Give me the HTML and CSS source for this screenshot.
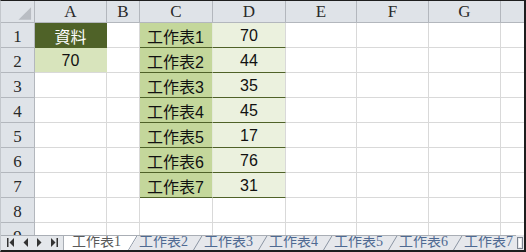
FILE: index.html
```html
<!DOCTYPE html>
<html lang="zh-Hant">
<head>
  <meta charset="UTF-8">
  <title>工作表1</title>
  <link rel="stylesheet" href="styles.css">
</head>
<body>
  <div class="window">
    <div class="grid">
      <!-- encabezados de columna -->
      <div class="corner">
        <svg width="34" height="21" viewBox="0 0 34 21"><polygon points="31,6 31,19 18,19" fill="#b9bdc3"/></svg>
      </div>
      <div class="col-head">A</div>
      <div class="col-head">B</div>
      <div class="col-head">C</div>
      <div class="col-head">D</div>
      <div class="col-head">E</div>
      <div class="col-head">F</div>
      <div class="col-head">G</div>
      <div class="col-head last"></div>

      <!-- fila 1 -->
      <div class="row-head">1</div>
      <div class="cell title">資料</div>
      <div class="cell"></div>
      <div class="cell name">工作表1</div>
      <div class="cell val">70</div>
      <div class="cell"></div><div class="cell"></div><div class="cell"></div><div class="cell last"></div>

      <!-- fila 2 -->
      <div class="row-head">2</div>
      <div class="cell result">70</div>
      <div class="cell"></div>
      <div class="cell name">工作表2</div>
      <div class="cell val">44</div>
      <div class="cell"></div><div class="cell"></div><div class="cell"></div><div class="cell last"></div>

      <!-- fila 3 -->
      <div class="row-head">3</div>
      <div class="cell"></div>
      <div class="cell"></div>
      <div class="cell name">工作表3</div>
      <div class="cell val">35</div>
      <div class="cell"></div><div class="cell"></div><div class="cell"></div><div class="cell last"></div>

      <!-- fila 4 -->
      <div class="row-head">4</div>
      <div class="cell"></div>
      <div class="cell"></div>
      <div class="cell name">工作表4</div>
      <div class="cell val">45</div>
      <div class="cell"></div><div class="cell"></div><div class="cell"></div><div class="cell last"></div>

      <!-- fila 5 -->
      <div class="row-head">5</div>
      <div class="cell"></div>
      <div class="cell"></div>
      <div class="cell name">工作表5</div>
      <div class="cell val">17</div>
      <div class="cell"></div><div class="cell"></div><div class="cell"></div><div class="cell last"></div>

      <!-- fila 6 -->
      <div class="row-head">6</div>
      <div class="cell"></div>
      <div class="cell"></div>
      <div class="cell name">工作表6</div>
      <div class="cell val">76</div>
      <div class="cell"></div><div class="cell"></div><div class="cell"></div><div class="cell last"></div>

      <!-- fila 7 -->
      <div class="row-head">7</div>
      <div class="cell"></div>
      <div class="cell"></div>
      <div class="cell name">工作表7</div>
      <div class="cell val">31</div>
      <div class="cell"></div><div class="cell"></div><div class="cell"></div><div class="cell last"></div>

      <!-- fila 8 -->
      <div class="row-head">8</div>
      <div class="cell"></div><div class="cell"></div><div class="cell"></div><div class="cell"></div>
      <div class="cell"></div><div class="cell"></div><div class="cell"></div><div class="cell last"></div>

      <!-- fila 9 -->
      <div class="row-head">9</div>
      <div class="cell"></div><div class="cell"></div><div class="cell"></div><div class="cell"></div>
      <div class="cell"></div><div class="cell"></div><div class="cell"></div><div class="cell last"></div>
    </div>

    <!-- pestañas -->
    <div class="tabbar">
      <div class="nav">
        <svg width="63" height="15" viewBox="0 0 63 15">
          <rect x="6" y="3" width="1.5" height="9" fill="#333"/>
          <polygon points="13,3 13,12 8.5,7.5" fill="#333"/>
          <polygon points="27,3 27,12 22.5,7.5" fill="#333"/>
          <polygon points="36,3 36,12 40.5,7.5" fill="#333"/>
          <polygon points="50,3 50,12 54.5,7.5" fill="#333"/>
          <rect x="55.5" y="3" width="1.5" height="9" fill="#333"/>
        </svg>
      </div>
      <div class="tabs">
        <div class="tab active"><span>工作表1</span><svg class="slash" width="10" height="15"><line x1="0.5" y1="15" x2="9.5" y2="0" stroke="#8a94a3"/></svg></div>
        <div class="tab"><span>工作表2</span><svg class="slash" width="10" height="15"><line x1="0.5" y1="15" x2="9.5" y2="0" stroke="#8a94a3"/></svg></div>
        <div class="tab"><span>工作表3</span><svg class="slash" width="10" height="15"><line x1="0.5" y1="15" x2="9.5" y2="0" stroke="#8a94a3"/></svg></div>
        <div class="tab"><span>工作表4</span><svg class="slash" width="10" height="15"><line x1="0.5" y1="15" x2="9.5" y2="0" stroke="#8a94a3"/></svg></div>
        <div class="tab"><span>工作表5</span><svg class="slash" width="10" height="15"><line x1="0.5" y1="15" x2="9.5" y2="0" stroke="#8a94a3"/></svg></div>
        <div class="tab"><span>工作表6</span><svg class="slash" width="10" height="15"><line x1="0.5" y1="15" x2="9.5" y2="0" stroke="#8a94a3"/></svg></div>
        <div class="tab"><span>工作表7</span></div>
      </div>
      <div class="scroll"><div class="thumb"></div></div>
    </div>
  </div>
</body>
</html>
```

FILE: styles.css
```css
body {
  margin: 0;
  background: white;
}
.window {
  width: 526px;
  height: 252px;
  box-sizing: border-box;
  border-top: 1px solid #1e1e1e;
  border-right: 2px solid #1e1e1e;
  border-bottom: 2px solid #1e1e1e;
  border-left: 1px solid #c3c7cc;
  display: flex;
  flex-direction: column;
  overflow: hidden;
}
.grid {
  height: 234px;
  flex: none;
  overflow: hidden;
  display: grid;
  grid-template-columns: 34px 72px 33px 73px 73px 71px 72px 72px 23px;
  grid-auto-rows: 25px;
  grid-template-rows: 22px;
  font-family: "Liberation Sans", "Noto Sans CJK TC", sans-serif;
  font-size: 16px;
  color: #111;
}
.grid > div {
  box-sizing: border-box;
}
.corner,
.col-head,
.row-head {
  background: #dfe3e8;
  border-right: 1px solid #b3b7bd;
  border-bottom: 1px solid #b3b7bd;
  font-family: "Liberation Serif", serif;
  font-size: 17px;
  color: #2a2a2a;
  display: flex;
  align-items: center;
  justify-content: center;
}
.corner svg {
  display: block;
}
.col-head {
  padding-top: 1px;
}
.row-head {
  padding-top: 3px;
}
.col-head.last {
  border-right: none;
}
.cell {
  border-right: 1px solid #d9d9d9;
  border-bottom: 1px solid #d9d9d9;
  display: flex;
  align-items: center;
  justify-content: center;
  padding-top: 1px;
}
.cell.last {
  border-right: none;
}
.title {
  background: #4f6228;
  color: white;
  border-color: #4f6228;
}
.result {
  background: #d8e4bc;
  border-right-color: #d8e4bc;
}
.name {
  background: #c4d79b;
  border-right-color: #e4ead8;
  border-bottom-color: #4f6228;
  justify-content: flex-start;
  padding-left: 7px;
}
.val {
  background: #ebf1de;
  border-bottom-color: #4f6228;
}
.tabbar {
  height: 15px;
  flex: none;
  display: flex;
  background: #e6e8ec;
  font-family: "Liberation Serif", "Noto Sans CJK TC", serif;
  font-size: 14px;
  line-height: 15px;
}
.nav {
  width: 63px;
  flex: none;
  box-sizing: border-box;
  border-top: 1px solid #a9aeb5;
  border-right: 1px solid #a9aeb5;
  background: #e4e7eb;
}
.nav svg {
  display: block;
  margin-top: -1px;
}
.tabs {
  flex: 1;
  display: flex;
  overflow: hidden;
  border-top: 1px solid #a9aeb5;
}
.tab {
  width: 65px;
  flex: none;
  display: flex;
  justify-content: space-between;
  padding-left: 1px;
  box-sizing: border-box;
  color: #4f6a92;
  white-space: nowrap;
}
.tab span {
  margin-top: -2px;
}
.tab.active {
  width: 74px;
  padding-left: 8px;
  color: #5a5a5a;
  background: white;
  clip-path: polygon(0 0, 100% 0, calc(100% - 9px) 100%, 0 100%);
}
.slash {
  flex: none;
  margin-top: -1px;
}
.scroll {
  width: 8px;
  flex: none;
  box-sizing: border-box;
  padding: 2px 1px 1px 1px;
  background: #e6e8ec;
}
.thumb {
  height: 100%;
  box-sizing: border-box;
  border: 1px solid #7d8590;
  background: white;
  box-shadow: inset 0 0 0 1px #e6e8ec;
}
```
